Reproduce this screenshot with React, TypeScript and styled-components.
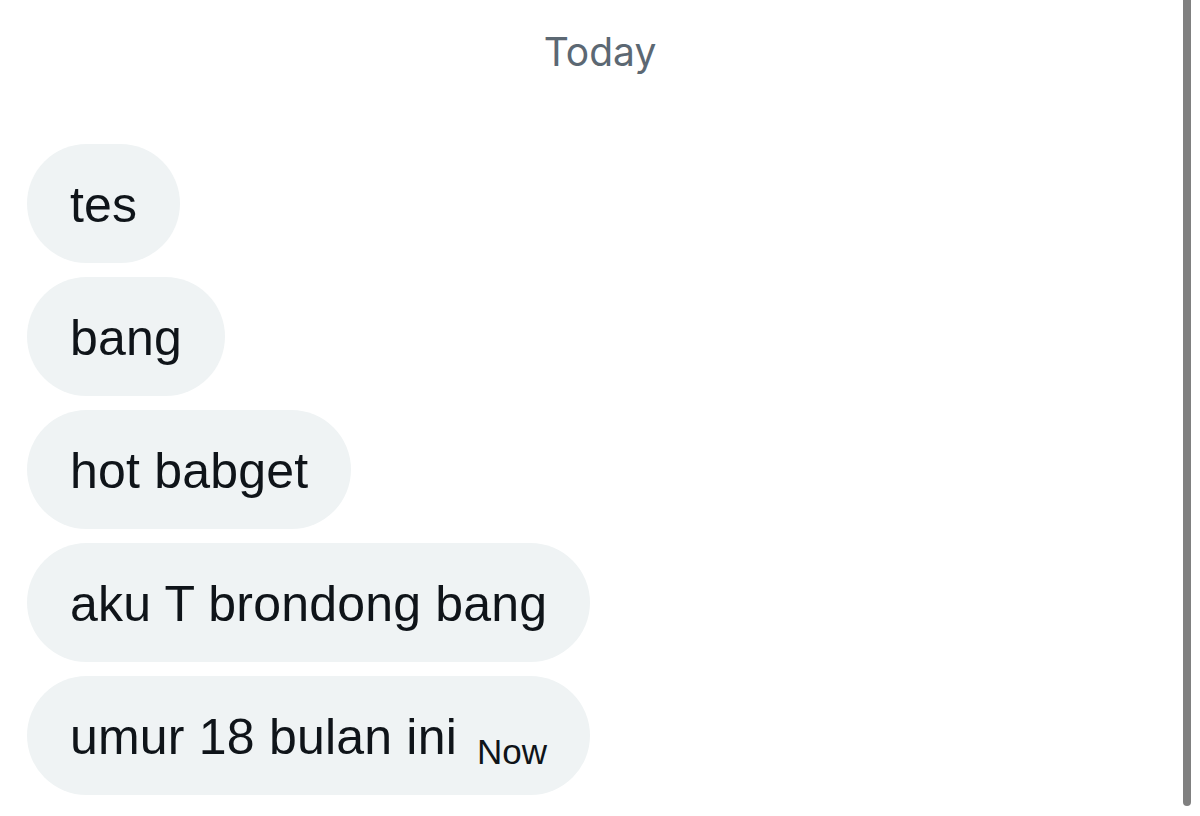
import React from "react";
import styled, { createGlobalStyle } from "styled-components";

const Global = createGlobalStyle`
  html, body { margin: 0; padding: 0; background: #ffffff; }
  body { width: 1200px; height: 816px; overflow: hidden; }
`;

const Screen = styled.div`
  position: relative;
  width: 1200px;
  height: 816px;
  background: #ffffff;
  box-sizing: border-box;
  display: flex;
  flex-direction: column;
  padding: 24px 0 0 27px;
`;

const DayLabel = styled.div`
  align-self: center;
  margin-left: -27px;
  font-family: "Inter", "Roboto", sans-serif;
  font-size: 39px;
  color: #5c6873;
  line-height: 56px;
  height: 56px;
`;

const Thread = styled.div`
  margin-top: 64px;
  display: flex;
  flex-direction: column;
  align-items: flex-start;
  gap: 14px;
`;

const Bubble = styled.div`
  display: flex;
  align-items: baseline;
  gap: 20px;
  height: 119px;
  box-sizing: border-box;
  padding: 4px 43px 0 43px;
  border-radius: 60px;
  background: #eff3f4;
  font-family: "Liberation Sans", Arial, sans-serif;
  font-size: 50px;
  letter-spacing: 0.2px;
  line-height: 115px;
  color: #0f1419;
`;

const Stamp = styled.span`
  font-family: "Liberation Sans", Arial, sans-serif;
  font-size: 35px;
  letter-spacing: 0;
  color: #0f1419;
  position: relative;
  top: 10px;
`;

const Scrollbar = styled.div`
  position: absolute;
  top: 0;
  right: 9px;
  width: 8px;
  height: 806px;
  border-radius: 0 0 4px 4px;
  background: #808080;
`;

const messages = ["tes", "bang", "hot babget", "aku T brondong bang"];

export default function App() {
  return (
    <Screen>
      <Global />
      <DayLabel>Today</DayLabel>
      <Thread>
        {messages.map((m) => (
          <Bubble key={m}>{m}</Bubble>
        ))}
        <Bubble>
          umur 18 bulan ini
          <Stamp>Now</Stamp>
        </Bubble>
      </Thread>
      <Scrollbar />
    </Screen>
  );
}
